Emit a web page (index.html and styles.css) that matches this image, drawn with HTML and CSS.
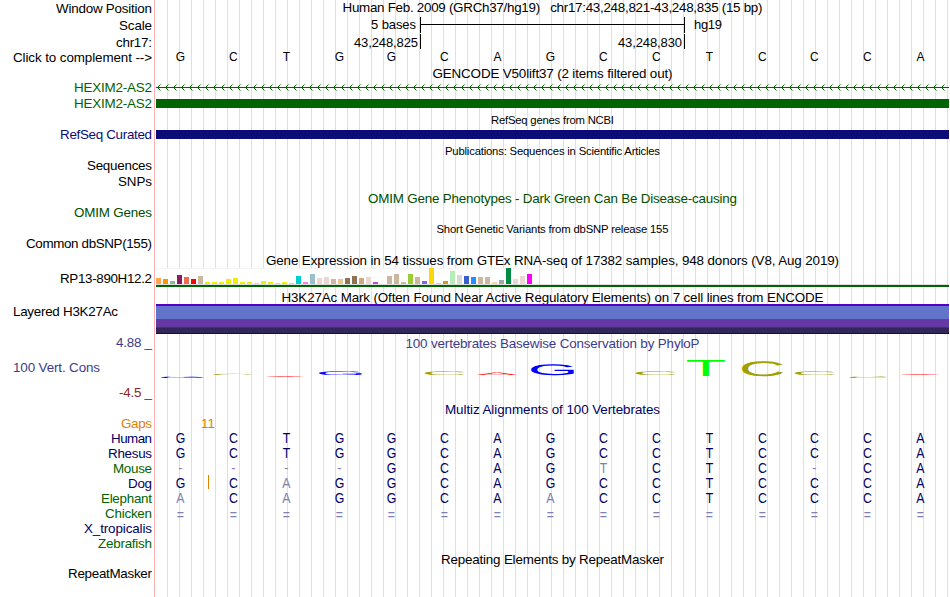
FILE: index.html
```html
<!DOCTYPE html>
<html lang="en">
<head>
<meta charset="utf-8">
<title>Genome browser</title>
<link rel="stylesheet" href="styles.css">
</head>
<body>
<main class="browser" id="browser"></main>
<script src="tracks.js"></script>
</body>
</html>
```
FILE: styles.css
```css
body {
  margin: 0;
  background: #fff;
  color: #000;
  font-family: "Liberation Sans", Arial, sans-serif;
  font-size: 13.4px;
  line-height: 15px;
}
.browser {
  width: 950px;
  height: 597px;
  overflow: hidden;
  background:
    linear-gradient(#ffb0b0, #ffb0b0) 154px 0 / 1px 100% no-repeat,
    repeating-linear-gradient(90deg, #dcdcf8 0 1px, transparent 1px 12px) 167px 0 / 782px 100% no-repeat;
}
.row {
  display: grid;
  grid-template-columns: 152px 793px;
  column-gap: 4px;
  white-space: pre;
}
.label { text-align: right; }
.label.left { text-align: left; padding-left: 13px; }
.title { text-align: center; }
.small { font-size: 11.3px; line-height: 13px; }
.green { color: #006400; }
.navy { color: #0c0c78; }
.omim { color: #005000; }
.deep { color: #000064; }
.cons { color: #3c3c8c; }
.low { color: #8c2828; }
.gap { color: #e08000; }
.bases {
  display: grid;
  grid-template-columns: repeat(15, 1fr);
  text-align: center;
  margin: 0 2px 0 -2px;
  font-size: 14px;
}
.bases span { transform: scaleX(.88); }
.bases.reference { font-size: 13.6px; }
.bases.unaligned { padding-top: 1.5px; }
.faded { color: #8080b0; }
.insert-count { padding-left: 45px; }
.insert-row { position: relative; }
.insert-mark {
  position: absolute;
  left: 52px;
  top: -1px;
  width: 1px;
  height: 14px;
  background: #e08000;
}
.canvas { display: block; }
.band { height: 9px; }
.band.exon { background: #006400; }
.band.refseq { background: #0c0c78; }
.gtex {
  height: 16px;
  width: 377px;
  display: flex;
  align-items: flex-end;
  gap: 2px;
  background: linear-gradient(#f4f4f4 0 1px, #fff 1px);
}
.bar { width: 5px; flex: none; }
.gtex-line { height: 2px; background: #006400; border-top: 1px solid #ddd; }
.mark {
  height: 30px;
  background: linear-gradient(#5500c8 0 2px, #6375cb 2px 15px, #6438a5 15px 23px, #3030a8 23px 24px, #322858 24px 29px, #151030 29px);
}
```
FILE: tracks.js
```js
const root = document.getElementById('browser');

// Text run spaced to a given width
const fit = (text, width) => `<span data-width="${width}">${text}</span>`;

function row(height, label, labelClass, content, labelTop = 0, contentTop = 0) {
  const el = document.createElement('div');
  el.className = 'row';
  el.style.height = height + 'px';
  el.innerHTML =
    `<div class="label ${labelClass}" style="margin-top:${labelTop}px">${label}</div>` +
    `<div style="margin-top:${contentTop}px">${content}</div>`;
  root.appendChild(el);
}
const title = (text, width, cls = '') => `<div class="title ${cls}">${fit(text, width)}</div>`;
const bases = (seq, cls, faded = '') =>
  `<div class="bases ${cls}">` + [...seq].map((b, i) =>
    `<span${faded[i] === '1' || '-='.includes(b) ? ' class="faded"' : ''}>${b}</span>`).join('') + '</div>';

const svg = (h, inner) => `<svg class="canvas" width="793" height="${h}" viewBox="0 0 793 ${h}">${inner}</svg>`;

const scale = svg(34,
  '<path d="M264.5 1v16M264.5 8.5H528.5M528.5 1v16M264.5 18v15M528.5 18v15" fill="none" stroke="#000"/>' +
  '<g font-size="13"><text x="215" y="13" textLength="45">5 bases</text><text x="538" y="13" textLength="28">hg19</text>' +
  '<text x="198" y="30.5" textLength="64">43,248,825</text><text x="462" y="30.5" textLength="64">43,248,830</text></g>');

let chevrons = 'M0 7.5H793';
for (let x = 1; x < 793; x += 8) chevrons += `M${x + 3.5} 4.5l-3 3l3 3`;

const expression = [
  ['#ffa54f', 6], ['#ee9a00', 5], ['#8fbc8f', 3], ['#8b1c62', 9], ['#ee6a50', 7], ['#ff0000', 5], ['#cdb79e', 8],
  ['#eeee00', 2], ['#eeee00', 2], ['#eeee00', 2], ['#eeee00', 5], ['#eeee00', 6], ['#eeee00', 2], ['#eeee00', 2],
  ['#eeee00', 1], ['#eeee00', 3], ['#eeee00', 2], ['#eeee00', 1], ['#eeee00', 2], ['#eeee00', 1], ['#00cdcd', 8],
  ['#ee82ee', 2], ['#9ac0cd', 10], ['#eed5d2', 6], ['#eed5d2', 7], ['#cdb79e', 5], ['#eec591', 5], ['#8b7355', 6],
  ['#8b7355', 8], ['#cdaa7d', 6], ['#eed5d2', 7], ['#b452cd', 2], ['#7a378b', 0], ['#cdb79e', 8], ['#cdb79e', 10],
  ['#cdb79e', 2], ['#9acd32', 10], ['#cdb79e', 7], ['#7a67ee', 3], ['#ffd700', 16], ['#ffb6c1', 1], ['#cd9b1d', 3],
  ['#b4eeb4', 13], ['#d9d9d9', 9], ['#3a5fcd', 8], ['#1e90ff', 7], ['#cdb79e', 7], ['#cdb79e', 7], ['#ffd39b', 2],
  ['#a6a6a6', 4], ['#008b45', 16], ['#eed5d2', 5], ['#eed5d2', 8], ['#ff00ff', 10]];
const gtex = '<div class="gtex">' + expression.map(([c, h]) =>
  `<span class="bar" style="height:${h}px;background:${c}"></span>`).join('') + '</div><div class="gtex-line"></div>';

// Conservation logo: base, left, right, top, bottom
const logo = [
  ['G', 160.5, 203, 376.3, 377.9], ['C', 213, 252.5, 373.9, 375.1], ['A', 265.5, 304.5, 376, 377], ['G', 319, 362, 371, 374.8],
  ['C', 425, 465, 371, 374.8], ['A', 477, 517, 372, 374.6], ['G', 531, 574, 364, 374.8], ['C', 636, 676, 371, 374.8],
  ['T', 687, 725, 360, 376], ['C', 742, 783, 361, 376], ['C', 795, 835, 371, 374.8], ['C', 849, 888, 376.2, 377.8],
  ['A', 900, 940, 374, 375]];
const shape = {
  A: ['#ff0000', 0.3, 66.4, 0, 68.8], C: ['#a0a000', 5, 68.5, -1, 70], G: ['#0000ff', 5, 71, -1, 70], T: ['#00ff00', 2.1, 59, 0, 68.8]
};
const logoSvg = svg(50, '<g font-size="100" text-rendering="geometricPrecision">' + logo.map(([b, l, r, t, bt]) => {
  const [c, x0, x1, y0, y1] = shape[b];
  const sx = (r - l) / (x1 - x0), sy = (bt - t) / (y1 - y0);
  return `<text fill="${c}" transform="translate(${l - 156 - x0 * sx} ${bt - 350 + y0 * sy}) scale(${sx} ${sy})">${b}</text>`;
}).join('') + '</g>');

const ref = 'GCTGGCAGCCTCCCA';
row(16, fit('Window Position', 96), '', title('Human Feb. 2009 (GRCh37/hg19)   chr17:43,248,821-43,248,835 (15 bp)', 420), 1, 0);
row(18, fit('Scale', 33), '', scale, 2);
row(16, fit('chr17:', 36), '', '', 1);
row(15, fit('Click to complement --&gt;', 139), '', bases(ref, 'reference'), 0, -1);
row(15, '', '', title('GENCODE V50lift37 (2 items filtered out)', 240), 0, 1);
row(17, fit('HEXIM2-AS2', 78), 'green', svg(13, `<path d="${chevrons}" fill="none" stroke="#006400"/>`));
row(15, fit('HEXIM2-AS2', 78), 'green', '<div class="band exon"></div>', -1, 2);
row(15, '', '', title('RefSeq genes from NCBI', 123, 'small'), 0, 2);
row(17, fit('RefSeq Curated', 92), 'navy', '<div class="band refseq"></div>', 0, 3);
row(14, '', '', title('Publications: Sequences in Scientific Articles', 215, 'small'), 0, 1);
row(16, fit('Sequences', 65), '', '');
row(16, fit('SNPs', 34), '', '');
row(15, '', '', title('OMIM Gene Phenotypes - Dark Green Can Be Disease-causing', 369, 'omim'), 0, 1);
row(16, fit('OMIM Genes', 78), 'omim', '');
row(15, '', '', title('Short Genetic Variants from dbSNP release 155', 232, 'small'), 0, 2);
row(16, fit('Common dbSNP(155)', 126), '', '');
row(16, '', '', title('Gene Expression in 54 tissues from GTEx RNA-seq of 17382 samples, 948 donors (V8, Aug 2019)', 573), 0, 1);
row(21, fit('RP13-890H12.2', 92), '', gtex, 3, 0);
row(15, '', '', title('H3K27Ac Mark (Often Found Near Active Regulatory Elements) on 7 cell lines from ENCODE', 542), 0, 1);
row(31, fit('Layered H3K27Ac', 105), 'left', '<div class="mark"></div>');
row(15, fit('4.88 _', 36), 'cons', title('100 vertebrates Basewise Conservation by PhyloP', 294, 'cons'), 0, 1);
row(35, fit('100 Vert. Cons', 87), 'left cons', logoSvg, 10, 0);
row(16, fit('-4.5 _', 33), 'low', '');
row(15, '', '', title('Multiz Alignments of 100 Vertebrates', 215, 'deep'), 0, 1);
row(15, fit('Gaps', 31), 'gap', '<div class="gap insert-count">11</div>');
row(15, fit('Human', 41), 'deep', bases(ref, 'deep'));
row(15, fit('Rhesus', 44), 'deep', bases(ref, 'deep'));
row(15, fit('Mouse', 39), 'green', bases('----GCAGTCTC-CA', 'deep', '000000001000000'));
row(15, fit('Dog', 24), 'deep', '<div class="insert-row">' + bases('GCAGGCAGCCTCCCA', 'deep', '001') + '<i class="insert-mark"></i></div>');
row(15, fit('Elephant', 51), 'green', bases('ACAGGCAACCTCCCA', 'deep', '101000010000000'));
row(15, fit('Chicken', 47), 'green', bases('===============', 'deep unaligned'));
row(15, fit('X_tropicalis', 68), 'deep', '');
row(15, fit('Zebrafish', 54), 'green', '');
row(15, '', '', title('Repeating Elements by RepeatMasker', 223), 0, 1);
row(16, fit('RepeatMasker', 84), '', '');

document.querySelectorAll('[data-width]').forEach(el => {
  const n = el.textContent.length;
  const spacing = (el.dataset.width - el.getBoundingClientRect().width) / (n - 1);
  el.style.letterSpacing = spacing + 'px';
  el.style.marginRight = -spacing + 'px';
});
```
